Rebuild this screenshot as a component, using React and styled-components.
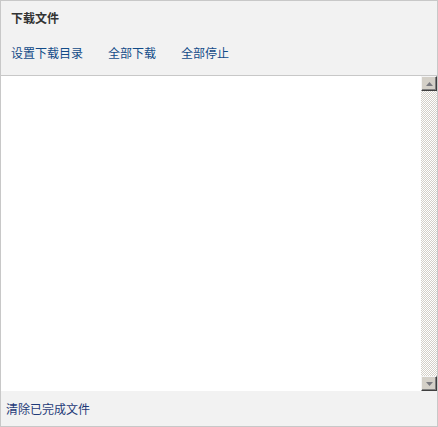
import React from "react";
import styled, { createGlobalStyle } from "styled-components";

const GlobalStyle = createGlobalStyle`
  html, body {
    margin: 0;
    padding: 0;
    background: #ffffff;
  }
  body {
    font-family: "Noto Sans CJK SC", "Noto Sans", sans-serif;
    font-size: 12px;
  }
`;

const Panel = styled.div`
  box-sizing: border-box;
  width: 438px;
  height: 427px;
  border: 1px solid #c8c8c8;
  display: flex;
  flex-direction: column;
  background: #f2f2f2;
`;

const Header = styled.div`
  height: 75px;
  border-bottom: 1px solid #c8c8c8;
  padding: 9px 0 0 10px;
  box-sizing: border-box;
`;

const Title = styled.div`
  font-size: 12px;
  line-height: 16px;
  font-weight: bold;
  color: #333333;
`;

const Actions = styled.div`
  display: flex;
  gap: 25px;
  margin-top: 19px;
`;

const ActionLink = styled.a`
  font-size: 12px;
  line-height: 16px;
  color: #124b88;
  text-decoration: none;
  cursor: pointer;
`;

const Content = styled.div`
  flex: 1;
  display: flex;
  background: #ffffff;
`;

const List = styled.div`
  flex: 1;
`;

const Scrollbar = styled.div`
  width: 16px;
  display: flex;
  flex-direction: column;
  background-color: #ffffff;
  background-image: conic-gradient(#ffffff 25%, #d4d0c8 0 50%, #ffffff 0 75%, #d4d0c8 0);
  background-size: 2px 2px;
`;

const ScrollButton = styled.div`
  box-sizing: border-box;
  height: 15px;
  background: #d4d0c8;
  border-top: 1px solid #f4f4f4;
  border-left: 1px solid #f4f4f4;
  border-right: 1px solid #404040;
  border-bottom: 1px solid #404040;
  box-shadow: inset -1px -1px 0 #808080;
  display: flex;
  align-items: center;
  justify-content: center;
`;

const Track = styled.div`
  flex: 1;
`;

const Arrow = ({ down }) => (
  <svg width="7" height="4" viewBox="0 0 7 4">
    <path d={down ? "M0 0H7L3.5 4Z" : "M3.5 0L7 4H0Z"} fill="#7a7a80" />
  </svg>
);

const Footer = styled.div`
  height: 35px;
  display: flex;
  align-items: center;
  padding-left: 5px;
`;

const ClearLink = styled.a`
  font-size: 12px;
  line-height: 16px;
  color: #1f3a78;
  text-decoration: none;
  cursor: pointer;
`;

export default function App() {
  return (
    <>
      <GlobalStyle />
      <Panel>
        <Header>
          <Title>下载文件</Title>
          <Actions>
            <ActionLink>设置下载目录</ActionLink>
            <ActionLink>全部下载</ActionLink>
            <ActionLink>全部停止</ActionLink>
          </Actions>
        </Header>
        <Content>
          <List />
          <Scrollbar>
            <ScrollButton>
              <Arrow />
            </ScrollButton>
            <Track />
            <ScrollButton>
              <Arrow down />
            </ScrollButton>
          </Scrollbar>
        </Content>
        <Footer>
          <ClearLink>清除已完成文件</ClearLink>
        </Footer>
      </Panel>
    </>
  );
}
